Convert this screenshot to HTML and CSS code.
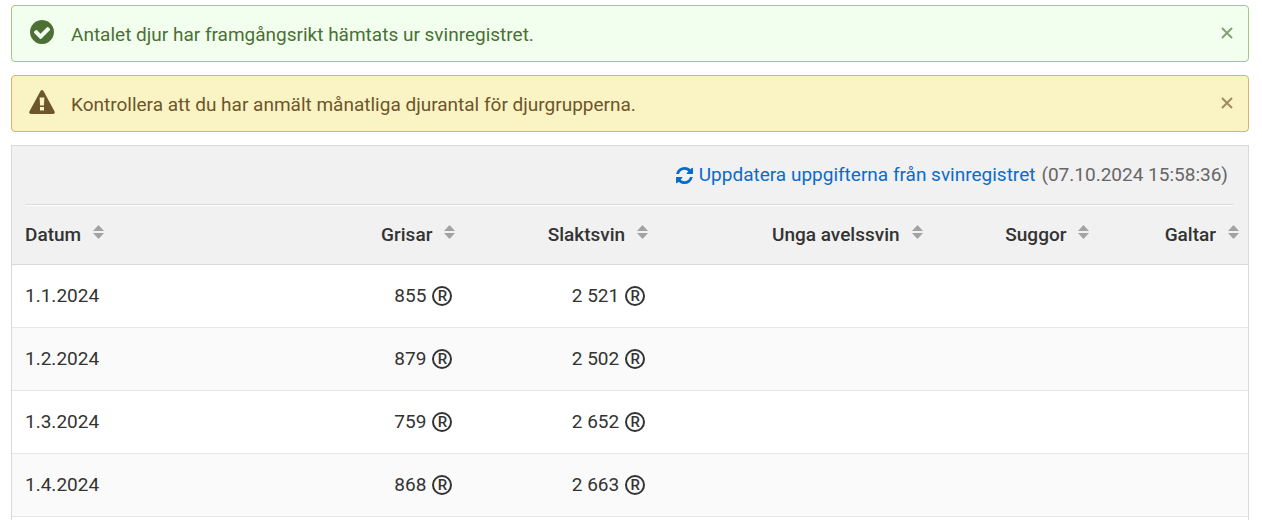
FILE: index.html
```html
<!DOCTYPE html>
<html lang="sv">
<head>
    <meta charset="UTF-8">
    <meta name="viewport" content="width=device-width, initial-scale=1.0">
    <title>Djurantal</title>
    <link rel="stylesheet" href="styles.css">
</head>
<body>
    <!-- icons used several times -->
    <svg class="sprite" aria-hidden="true">
        <symbol id="sort" viewBox="0 0 11 14">
            <path d="M5.500 0 11 6H0zM0 8h11l-5.500 6z"/>
        </symbol>
        <symbol id="close" viewBox="0 0 12 12">
            <path d="M1 1l10 10M11 1 1 11" fill="none" stroke="currentColor" stroke-width="2"/>
        </symbol>
    </svg>

    <div class="alert success">
        <svg class="alert-icon" viewBox="0 0 1536 1536" aria-hidden="true">
            <path d="M1284 606q0-28-18-46l-91-90q-19-19-45-19t-45 19L677 877 451 651q-19-19-45-19t-45 19l-91 90q-18 18-18 46 0 27 18 45l362 362q19 19 45 19 27 0 46-19l543-543q18-18 18-45zm252 162q0 209-103 385.500T1153.500 1433 768 1536t-385.500-103T103 1153.500 0 768t103-385.500T382.500 103 768 0t385.500 103T1433 382.500 1536 768z"/>
        </svg>
        <p>Antalet djur har framgångsrikt hämtats ur svinregistret.</p>
        <button class="close" type="button" aria-label="Stäng"><svg><use href="#close"/></svg></button>
    </div>
    <div class="alert warning">
        <svg class="alert-icon" viewBox="0 0 26 24" aria-hidden="true">
            <path fill-rule="evenodd" d="M11.500.9Q13-.9 14.500.9L25.600 21.500Q26.400 24 24 24H2Q-.4 24 .4 21.500zM10.600 7.500l.5 8h3.800l.5-8zM11 17v3.600h4V17z"/>
        </svg>
        <p>Kontrollera att du har anmält månatliga djurantal för djurgrupperna.</p>
        <button class="close" type="button" aria-label="Stäng"><svg><use href="#close"/></svg></button>
    </div>

    <div class="panel">
        <div class="toolbar">
            <a class="update" href="#">
                <svg viewBox="0 0 1536 1536" aria-hidden="true">
                    <path d="M1511 928q0 5-1 7-64 268-268 434.500T764 1536q-146 0-282.500-55T238 1324l-129 129q-19 19-45 19t-45-19-19-45V960q0-26 19-45t45-19h448q26 0 45 19t19 45-19 45l-137 137q71 66 161 102t187 36q134 0 250-65t186-179q11-17 53-117 8-23 30-23h192q13 0 22.500 9.500t9.500 22.500zm25-800v448q0 26-19 45t-45 19h-448q-26 0-45-19t-19-45 19-45l138-138Q969 256 768 256q-134 0-250 65T332 500q-11 17-53 117-8 23-30 23H50q-13 0-22.500-9.500T18 608v-7q65-268 270-434.500T768 0q146 0 284 55.500T1297 212l130-129q19-19 45-19t45 19 19 45z"/>
                </svg>
                Uppdatera uppgifterna från svinregistret
            </a>
            <span class="time">(07.10.2024 15:58:36)</span>
        </div>
        <table>
            <thead>
                <tr>
                    <th class="date"><button type="button">Datum <svg><use href="#sort"/></svg></button></th>
                    <th class="pigs"><button type="button">Grisar <svg><use href="#sort"/></svg></button></th>
                    <th class="slaughter"><button type="button">Slaktsvin <svg><use href="#sort"/></svg></button></th>
                    <th class="young"><button type="button">Unga avelssvin <svg><use href="#sort"/></svg></button></th>
                    <th class="sows"><button type="button">Suggor <svg><use href="#sort"/></svg></button></th>
                    <th class="boars"><button type="button">Galtar <svg><use href="#sort"/></svg></button></th>
                </tr>
            </thead>
            <tbody>
                <tr>
                    <td>1.1.2024</td>
                    <td><div class="num">855 <span class="reg">R</span></div></td>
                    <td><div class="num">2 521 <span class="reg">R</span></div></td>
                    <td></td>
                    <td></td>
                    <td></td>
                </tr>
                <tr>
                    <td>1.2.2024</td>
                    <td><div class="num">879 <span class="reg">R</span></div></td>
                    <td><div class="num">2 502 <span class="reg">R</span></div></td>
                    <td></td>
                    <td></td>
                    <td></td>
                </tr>
                <tr>
                    <td>1.3.2024</td>
                    <td><div class="num">759 <span class="reg">R</span></div></td>
                    <td><div class="num">2 652 <span class="reg">R</span></div></td>
                    <td></td>
                    <td></td>
                    <td></td>
                </tr>
                <tr>
                    <td>1.4.2024</td>
                    <td><div class="num">868 <span class="reg">R</span></div></td>
                    <td><div class="num">2 663 <span class="reg">R</span></div></td>
                    <td></td>
                    <td></td>
                    <td></td>
                </tr>
            </tbody>
        </table>
    </div>
</body>
</html>
```
FILE: styles.css
```css
* {
    box-sizing: border-box;
}

body {
    display: flex;
    flex-direction: column;
    gap: 13px;
    min-height: 100vh;
    margin: 0;
    padding: 5px 13px 0 11px;
    font-family: Roboto, "Liberation Sans", sans-serif;
    font-size: 19px;
    line-height: 24px;
    color: #333;
    background-color: #fff;
}

button {
    padding: 0;
    border: 0;
    font: inherit;
    color: inherit;
    background: none;
    cursor: pointer;
}

.sprite {
    display: none;
}

/* alerts */
.alert {
    display: flex;
    align-items: center;
    height: 57px;
    padding: 2px 15px 0 17px;
    border: 1px solid;
    border-radius: 4px;
}

.alert p {
    flex: 1;
    margin: 0 0 0 16px;
}

.alert-icon {
    width: 26px;
    height: 24px;
    margin-bottom: 6px;
    fill: currentColor;
}

.success {
    color: #4b6f35;
    border-color: #a3c97f;
    background-color: #f2ffee;
}

.warning {
    color: #6d552c;
    border-color: #d9b36c;
    background-color: #faf3c3;
}

.close {
    display: flex;
    margin-bottom: 4px;
    opacity: .65;
}

.close svg {
    width: 12px;
    height: 12px;
}

/* table panel */
.panel {
    flex: 1;
    border: 1px solid #d9d9d9;
    border-bottom: 0;
    background: #fff;
}

.toolbar {
    display: flex;
    justify-content: flex-end;
    gap: 6px;
    padding: 17px 20px 17px 13px;
    background-color: #f1f1f1;
}

.update {
    display: flex;
    align-items: center;
    gap: 6px;
    color: #0b6bcb;
    text-decoration: none;
}

.update svg {
    width: 17px;
    height: 17px;
    fill: currentColor;
}

.time {
    color: #666;
}

table {
    width: 100%;
    border-collapse: separate;
    border-spacing: 0;
    table-layout: fixed;
}

/* divider: grey line with a white line under it, inset on both sides */
thead {
    background:
        linear-gradient(#d9d9d9 1px, #fff 1px, #fff 2px, transparent 2px) 13px 0 / calc(100% - 27px) 100% no-repeat,
        #f1f1f1;
}

th {
    height: 61px;
    padding: 2px 9px 0 0;
    border-bottom: 1px solid #d9d9d9;
    font-weight: 500;
    text-align: right;
}

th button {
    display: inline-flex;
    align-items: center;
    gap: 12px;
}

th svg {
    width: 11px;
    height: 14px;
    margin-bottom: 6px;
    fill: #a3a3a3;
}

td {
    height: 63px;
    padding: 0 12px 0 0;
    border-bottom: 1px solid #e6e6e6;
}

th:first-child,
td:first-child {
    padding-left: 13px;
    text-align: left;
}

tbody tr:nth-child(even) {
    background-color: #fafafa;
}

.date { width: 20.4%; }
.pigs { width: 16.2%; }
.slaughter { width: 15.6%; }
.young { width: 22.2%; }
.sows { width: 13.5%; }
.boars { width: 12.1%; }

.num {
    display: flex;
    justify-content: flex-end;
    align-items: center;
    gap: 6px;
}

.reg {
    width: 20px;
    height: 20px;
    border: 2px solid #333;
    border-radius: 50%;
    font-size: 15px;
    font-weight: 500;
    line-height: 16px;
    text-align: center;
}
```
